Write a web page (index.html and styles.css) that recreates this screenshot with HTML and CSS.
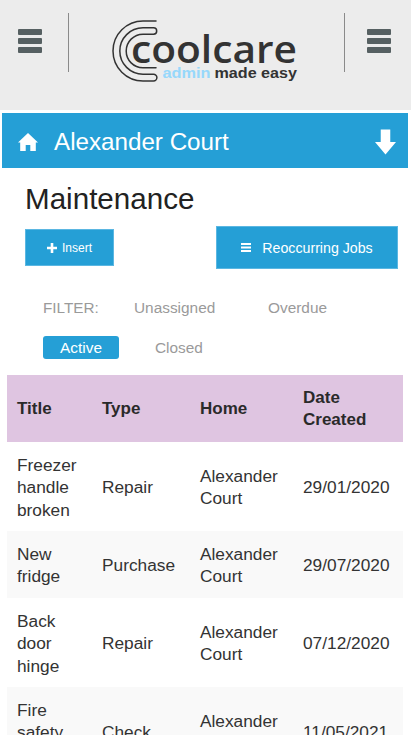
FILE: index.html
```html
<!DOCTYPE html>
<html lang="en">
<head>
<meta charset="utf-8">
<title>Maintenance</title>
<link rel="stylesheet" href="styles.css">
</head>
<body>
<header class="top">
  <div class="top-side">
    <svg class="burger" viewBox="0 0 24 24"><rect x="0" y="0" width="24" height="6" rx="1"/><rect x="0" y="9" width="24" height="6" rx="1"/><rect x="0" y="18" width="24" height="6" rx="1"/></svg>
  </div>
  <div class="divider"></div>
  <div class="logo-wrap">
    <svg class="logo" viewBox="0 0 200 70" width="200" height="70">
      <path class="logo-line" d="M46 1H33A30 30 0 0 0 33 61H43.500a3.400 3.400 0 0 0 0-6.800H33A23.200 23.200 0 0 1 33 7.800H43.500a3.200 3.200 0 0 1 0 6.400H33A16.800 16.800 0 0 0 33 47.800H46"/>
      <text class="logo-main" x="21" y="42.500" textLength="166" lengthAdjust="spacingAndGlyphs">coolcare</text>
      <text class="logo-sub" x="52.500" y="58" textLength="48" lengthAdjust="spacingAndGlyphs">admin</text>
      <text class="logo-sub logo-sub-dark" x="104.500" y="58" textLength="82.500" lengthAdjust="spacingAndGlyphs">made easy</text>
    </svg>
  </div>
  <div class="divider"></div>
  <div class="top-side">
    <svg class="burger" viewBox="0 0 24 24"><rect x="0" y="0" width="24" height="6" rx="1"/><rect x="0" y="9" width="24" height="6" rx="1"/><rect x="0" y="18" width="24" height="6" rx="1"/></svg>
  </div>
</header>

<section class="home-bar">
  <svg class="home-icon" viewBox="0 0 20 20"><path d="M10 1 L20 10.500 L17.800 10.500 V19 H12.300 V13 H7.700 V19 H2.200 V10.500 L0 10.500 Z"/></svg>
  <span class="home-name">Alexander Court</span>
  <svg class="down-icon" viewBox="0 0 22 26"><path d="M6 0H16V13H22L11 26L0 13H6Z"/></svg>
</section>

<h1 class="page-title">Maintenance</h1>

<div class="actions">
  <button class="btn btn-small">
    <svg class="plus" viewBox="0 0 10 10"><path d="M3.700 0H6.300V3.700H10V6.300H6.300V10H3.700V6.300H0V3.700H3.700Z"/></svg>
    Insert
  </button>
  <button class="btn btn-large">
    <svg class="list" viewBox="0 0 10 9"><rect width="10" height="2"/><rect y="3.500" width="10" height="2"/><rect y="7" width="10" height="2"/></svg>
    Reoccurring Jobs
  </button>
</div>

<div class="filters">
  <div class="filter-row">
    <span class="filter-label">FILTER:</span>
    <span class="filter filter-unassigned">Unassigned</span>
    <span class="filter filter-overdue">Overdue</span>
  </div>
  <div class="filter-row filter-row-two">
    <span class="filter filter-active">Active</span>
    <span class="filter filter-closed">Closed</span>
  </div>
</div>

<table class="jobs">
  <colgroup><col class="c1"><col class="c2"><col class="c3"><col class="c4"></colgroup>
  <thead>
    <tr><th>Title</th><th>Type</th><th>Home</th><th>Date Created</th></tr>
  </thead>
  <tbody>
    <tr><td>Freezer handle broken</td><td>Repair</td><td>Alexander Court</td><td>29/01/2020</td></tr>
    <tr><td>New fridge</td><td>Purchase</td><td>Alexander Court</td><td>29/07/2020</td></tr>
    <tr><td>Back door hinge</td><td>Repair</td><td>Alexander Court</td><td>07/12/2020</td></tr>
    <tr><td>Fire safety check</td><td>Check</td><td>Alexander Court</td><td>11/05/2021</td></tr>
  </tbody>
</table>
</body>
</html>
```
FILE: styles.css
```css
* { box-sizing: border-box; }
html, body { margin: 0; padding: 0; height: 735px; overflow: hidden; background: #fff; }
body { font-family: "Liberation Sans", Arial, sans-serif; color: #333; }

.top {
  height: 110px;
  background: #ececec;
  display: flex;
  align-items: flex-start;
  padding-top: 13px;
}
.top-side { width: 66px; flex: none; display: flex; justify-content: center; padding: 16px 0 0 2px; }
.top-side:first-child { width: 60px; padding-left: 0; }
.burger { width: 24px; height: 24px; fill: #566062; }
.divider { width: 1.500px; height: 59px; background: #8a8a8a; flex: none; margin-left: 7.500px; }
.logo-wrap { flex: 1; padding-top: 6.500px; padding-left: 41px; }
.logo { display: block; overflow: visible; }
.logo-line { fill: none; stroke: #333; stroke-width: 1.500; stroke-linecap: round; }
.logo-main { font-family: "Open Sans", sans-serif; font-weight: 600; font-size: 37px; fill: #333; }
.logo-sub { font-family: "Liberation Sans", sans-serif; font-weight: 700; font-size: 15.500px; fill: #97d8fb; }
.logo-sub-dark { fill: #333; }

.home-bar {
  margin: 3px 3px 0 2px;
  height: 55px;
  background: #259fd6;
  display: flex;
  align-items: center;
  padding: 2px 12px 0 16px;
  color: #fff;
}
.home-icon { width: 20px; height: 20px; fill: #fff; flex: none; }
.home-name { font-size: 24.200px; margin-left: 16px; flex: 1; }
.down-icon { width: 21px; height: 26px; fill: #fff; flex: none; }

.page-title {
  margin: 14px 0 0 25px;
  font-size: 29.600px;
  font-weight: 400;
  line-height: 34px;
  color: #222;
}

.actions {
  display: flex;
  justify-content: space-between;
  align-items: center;
  padding: 10px 13px 0 25px;
}
.btn {
  border: 1px solid #5bb7e2;
  background: #259fd6;
  color: #fff;
  font-family: inherit;
  display: flex;
  align-items: center;
  justify-content: center;
  padding: 0;
}
.btn-small { width: 89px; height: 37px; font-size: 12px; gap: 5px; }
.btn-large { width: 182px; height: 43px; font-size: 14.200px; gap: 11px; }
.plus { width: 10px; height: 10px; fill: #fff; }
.list { width: 10px; height: 9px; fill: #fff; }

.filters { padding: 27px 0 0 43px; color: #9a9a9a; font-size: 15.400px; }
.filter-row { display: flex; align-items: center; height: 23px; }
.filter-row-two { margin-top: 17px; }
.filter-label { font-size: 15.300px; width: 91px; }
.filter-unassigned { width: 134px; }
.filter-active {
  width: 76px;
  height: 23px;
  line-height: 23px;
  text-align: center;
  color: #fff;
  background: #259fd6;
  border-radius: 3px;
}
.filter-closed { margin-left: 36px; }

.jobs {
  margin: 16px 8px 0 7px;
  width: 396px;
  table-layout: fixed;
  border-collapse: collapse;
  font-size: 17.300px;
  line-height: 22.400px;
}
.c1 { width: 85px; }
.c2 { width: 98px; }
.c3 { width: 103px; }
.c4 { width: 110px; }
.jobs th, .jobs td { padding: 12px 5px 10px 10px; text-align: left; vertical-align: middle; }
.jobs th { background: #dfc5e1; color: #2a2a2a; font-weight: 700; font-size: 17px; }
.jobs tbody tr:nth-child(even) td { background: #f9f9f9; }
```
